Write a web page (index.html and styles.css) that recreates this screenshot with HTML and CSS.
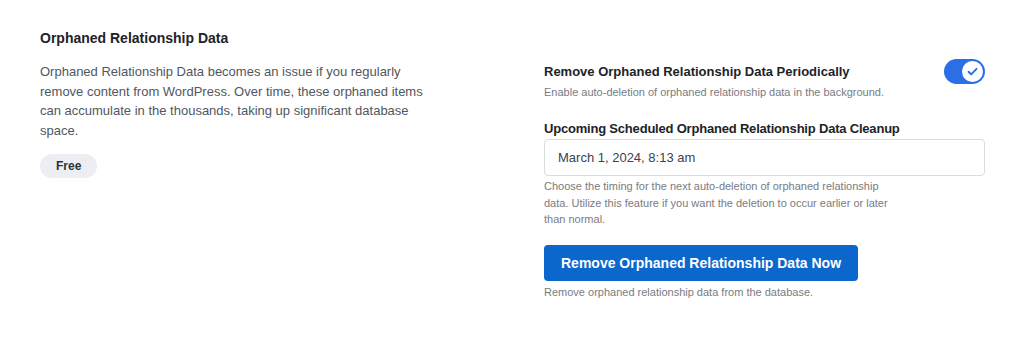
FILE: index.html
```html
<!DOCTYPE html>
<html>
<head>
<meta charset="utf-8">
<link rel="stylesheet" href="styles.css">
</head>
<body>
<div class="setting">
  <div class="info">
    <h2 class="title">Orphaned Relationship Data</h2>
    <p class="desc">Orphaned Relationship Data becomes an issue if you regularly remove content from WordPress. Over time, these orphaned items can accumulate in the thousands, taking up significant database space.</p>
    <span class="pill">Free</span>
  </div>
  <div class="controls">
    <div class="toggle-row">
      <span class="label">Remove Orphaned Relationship Data Periodically</span>
      <span class="toggle"><span class="knob"><svg width="13" height="13" viewBox="0 0 13 13"><path d="M2.5 6.8 L5.2 9.3 L10.5 3.8" fill="none" stroke="#2a6fe6" stroke-width="1.9" stroke-linecap="round" stroke-linejoin="round"/></svg></span></span>
    </div>
    <p class="hint">Enable auto-deletion of orphaned relationship data in the background.</p>
    <div class="label field-label">Upcoming Scheduled Orphaned Relationship Data Cleanup</div>
    <div class="input">March 1, 2024, 8:13 am</div>
    <p class="hint help">Choose the timing for the next auto-deletion of orphaned relationship data. Utilize this feature if you want the deletion to occur earlier or later than normal.</p>
    <button class="btn">Remove Orphaned Relationship Data Now</button>
    <p class="hint after">Remove orphaned relationship data from the database.</p>
  </div>
</div>
</body>
</html>
```
FILE: styles.css
```css
body {
  margin: 0;
  background: #ffffff;
  font-family: "Liberation Sans", Arial, sans-serif;
  color: #1d2327;
}
.setting {
  display: grid;
  grid-template-columns: 441px 441px;
  column-gap: 63px;
  padding: 28px 39px 0 40px;
}
.title {
  margin: 0 0 14px;
  font-size: 14px;
  line-height: 20px;
  font-weight: 700;
  color: #1d2327;
}
.desc {
  max-width: 395px;
  margin: 0;
  font-size: 13px;
  line-height: 19.5px;
  color: #50575e;
}
.pill {
  display: inline-flex;
  align-items: center;
  height: 24px;
  margin-top: 14px;
  padding: 0 16px;
  border-radius: 12px;
  background: #eceef2;
  font-size: 12px;
  font-weight: 700;
  color: #2c3338;
}
.controls {
  padding-top: 31px;
}
.toggle-row {
  display: flex;
  align-items: center;
  justify-content: space-between;
  height: 25px;
}
.label {
  font-size: 13px;
  line-height: 20px;
  font-weight: 700;
  color: #1d2327;
}
.toggle {
  display: flex;
  align-items: center;
  justify-content: flex-end;
  width: 41px;
  height: 25px;
  box-sizing: border-box;
  padding-right: 2px;
  border-radius: 13px;
  background: #2a6fe6;
}
.knob {
  display: flex;
  align-items: center;
  justify-content: center;
  width: 21px;
  height: 21px;
  border-radius: 50%;
  background: #ffffff;
}
.hint {
  margin: 0;
  font-size: 11px;
  line-height: 16px;
  color: #787c82;
}
.field-label {
  margin-top: 19px;
  letter-spacing: -0.2px;
}
.input {
  display: flex;
  align-items: center;
  height: 37px;
  box-sizing: border-box;
  padding-left: 13px;
  border: 1px solid #dcdcde;
  border-radius: 4px;
  font-size: 13px;
  color: #3c434a;
}
.help {
  max-width: 360px;
  margin-top: 2px;
  line-height: 16.5px;
}
.btn {
  display: block;
  margin-top: 17px;
  height: 36px;
  padding: 0 17px;
  border: none;
  border-radius: 4px;
  background: #0b67cc;
  color: #ffffff;
  font-family: "Liberation Sans", Arial, sans-serif;
  font-size: 14px;
  font-weight: 700;
}
.after {
  margin-top: 3px;
}
```
